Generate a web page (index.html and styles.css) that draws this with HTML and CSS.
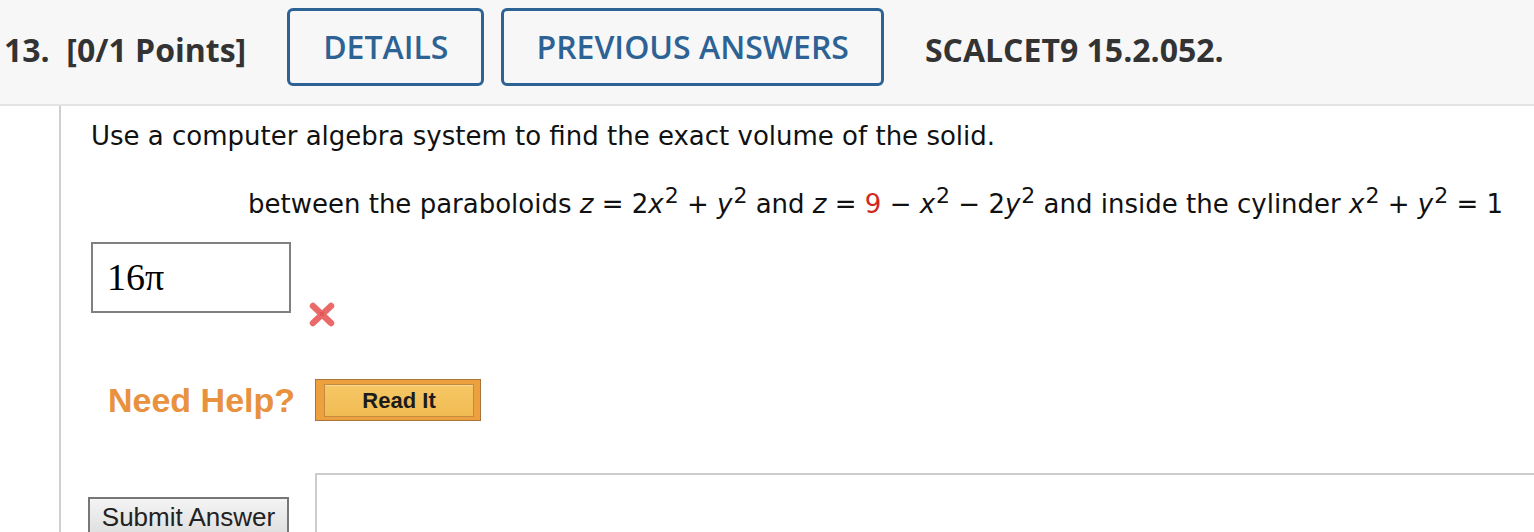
FILE: index.html
```html
<!DOCTYPE html>
<html>
<head>
<meta charset="utf-8">
<link rel="stylesheet" href="styles.css">
</head>
<body>
<header class="qhead">
  <div class="qnum">13.&nbsp; [0/1 Points]</div>
  <button class="hbtn">DETAILS</button>
  <button class="hbtn">PREVIOUS ANSWERS</button>
  <div class="qref">SCALCET9 15.2.052.</div>
</header>
<main class="qbody">
  <div class="gutter"></div>
  <div class="content">
    <p class="prompt">Use a computer algebra system to find the exact volume of the solid.</p>
    <p class="math">between the paraboloids <i>z</i> = 2<i>x</i><sup>2</sup> + <i>y</i><sup>2</sup> and <i>z</i> = <span class="red">9</span> − <i>x</i><sup>2</sup> − 2<i>y</i><sup>2</sup> and inside the cylinder <i>x</i><sup>2</sup> + <i>y</i><sup>2</sup> = 1</p>
    <div class="answer-row">
      <div class="answer">16π</div>
      <svg class="wrong" width="28" height="27" viewBox="0 0 28 27"><g stroke="#e85a5a" stroke-width="6.5" stroke-linecap="round" opacity="0.9"><line x1="5" y1="5" x2="23" y2="22"/><line x1="23" y1="5" x2="5" y2="22"/></g><rect x="12" y="11" width="4" height="4" fill="#d94646" opacity="0.5"/></svg>
    </div>
    <div class="help-row">
      <span class="need">Need Help?</span>
      <span class="readit"><span class="readit-in">Read It</span></span>
    </div>
    <div class="bottom-row">
      <button class="submit">Submit Answer</button>
      <div class="feedback"></div>
    </div>
  </div>
</main>
</body>
</html>
```
FILE: styles.css
```css
html, body {
  margin: 0;
  padding: 0;
  background: #ffffff;
}
body {
  width: 1534px;
  height: 532px;
  overflow: hidden;
}
.qhead {
  display: flex;
  align-items: center;
  height: 104px;
  background: #f7f7f7;
  border-bottom: 2px solid #e3e3e3;
  padding-left: 4px;
  font-family: "Open Sans", sans-serif;
}
.qnum {
  font-weight: 700;
  font-size: 32px;
  color: #333333;
  margin-right: 41px;
  margin-top: -6px;
  white-space: pre;
}
.hbtn {
  height: 78px;
  margin-top: -11px;
  border: 3px solid #2d6295;
  border-radius: 6px;
  background: transparent;
  color: #2d6295;
  font-family: "Open Sans", sans-serif;
  font-weight: 600;
  font-size: 32px;
  padding: 0 33px;
  margin-right: 17px;
}
.hbtn + .hbtn { margin-right: 41px; padding: 0 32px; }
.qref {
  font-weight: 700;
  font-size: 32px;
  color: #333333;
  margin-top: -6px;
}
.qbody {
  display: flex;
  height: 426px;
}
.gutter {
  width: 59px;
  border-right: 2px solid #cfcfcf;
  flex: none;
}
.content {
  flex: 1;
  padding-left: 30px;
  display: flex;
  flex-direction: column;
  font-family: "DejaVu Sans", Verdana, sans-serif;
  color: #111111;
}
.prompt {
  margin: 16px 0 0 0;
  font-size: 26px;
  line-height: 28px;
  white-space: nowrap;
}
.math {
  margin: 40px 0 0 157px;
  font-size: 26px;
  line-height: 28px;
  white-space: nowrap;
}
.math sup {
  font-size: 22px;
  line-height: 0;
  margin-left: 1px;
  vertical-align: 0.45em;
}
.red { color: #d0291e; }
.answer-row {
  display: flex;
  align-items: flex-end;
  margin-top: 24px;
}
.answer {
  width: 182px;
  height: 67px;
  border: 2px solid #808080;
  box-sizing: content-box;
  padding-left: 14px;
  font-family: "Liberation Serif", "DejaVu Serif", serif;
  font-size: 38px;
  line-height: 67px;
  color: #000;
}
.wrong {
  margin-left: 17px;
  margin-bottom: -15px;
  filter: blur(0.5px);
}
.help-row {
  display: flex;
  align-items: center;
  margin-top: 66px;
  margin-left: 17px;
}
.need {
  font-family: "Liberation Sans", Arial, sans-serif;
  font-weight: 700;
  font-size: 34px;
  color: #e8913e;
  margin-right: 20px;
}
.readit {
  display: inline-block;
  width: 166px;
  height: 42px;
  border: 1px solid #a8743c;
  background: #eca03e;
  box-sizing: border-box;
  padding: 4px 6px 3px 8px;
}
.readit-in {
  display: block;
  height: 33px;
  background: linear-gradient(#f6c765, #f1bb52);
  border: 1px solid #c48a3e;
  box-shadow: inset 0 1px 0 #f9d98f;
  box-sizing: border-box;
  text-align: center;
  font-family: "Liberation Sans", Arial, sans-serif;
  font-weight: 700;
  font-size: 22px;
  line-height: 31px;
  color: #1c1c1c;
}
.bottom-row {
  display: flex;
  align-items: flex-start;
  margin-top: 52px;
  margin-left: -3px;
}
.submit {
  margin-top: 24px;
  width: 201px;
  height: 44px;
  border: 2px solid #777777;
  background: linear-gradient(#f4f4f4, #dcdcdc);
  font-family: "Liberation Sans", Arial, sans-serif;
  font-size: 26px;
  color: #222;
  padding: 0;
  line-height: 36px;
  text-align: center;
  display: flex;
  justify-content: center;
  align-items: flex-start;
}
.feedback {
  flex: 1;
  margin-left: 26px;
  height: 80px;
  border: 2px solid #cccccc;
  border-right: none;
}
```
